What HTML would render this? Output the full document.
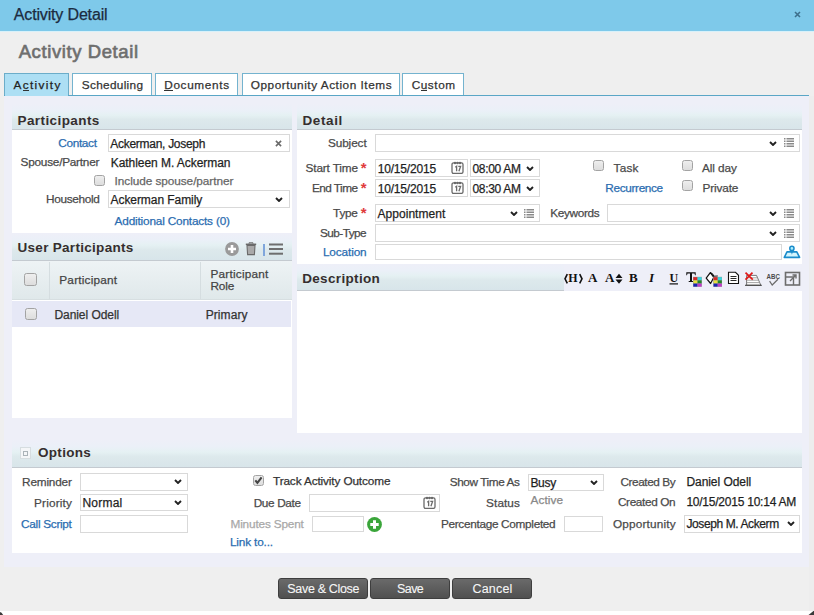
<!DOCTYPE html><html><head><meta charset="utf-8"><style>
html,body{margin:0;padding:0;}
body{width:814px;height:615px;position:relative;overflow:hidden;background:#efefef;font-family:"Liberation Sans",sans-serif;}
div{position:absolute;}
.t{position:absolute;white-space:nowrap;line-height:1;-webkit-text-stroke:0.25px currentColor;}
</style></head><body>
<div style="left:0px;top:0px;width:814px;height:31px;background:#7ec9ea;"></div>
<div style="left:0px;top:31px;width:814px;height:1px;background:#d8f1fa;"></div>
<span class="t" style="left:13.80px;top:7px;font-size:16px;color:#1b2b40;letter-spacing:-0.159px;">Activity Detail</span>
<svg style="position:absolute;left:794px;top:11px" width="7" height="7" viewBox="0 0 7 7"><path d="M1 1L6 6M6 1L1 6" stroke="#3d6f8c" stroke-width="1.6"/></svg>
<span class="t" style="left:18.70px;top:43px;font-size:18.5px;color:#6e6e6e;letter-spacing:0.591px;-webkit-text-stroke:0.65px #6e6e6e;">Activity Detail</span>
<div style="left:4px;top:96px;width:805px;height:471px;background:#eeeff8;"></div>
<div style="left:4px;top:73px;width:63px;height:22px;background:#addff4;border:1px solid #6cadc9;border-bottom:none;"></div>
<div style="left:72px;top:73px;width:78px;height:22px;background:#fff;border:1px solid #74b3cf;border-bottom:none;"></div>
<div style="left:155px;top:73px;width:80.5px;height:22px;background:#fff;border:1px solid #74b3cf;border-bottom:none;"></div>
<div style="left:241.5px;top:73px;width:156.5px;height:22px;background:#fff;border:1px solid #74b3cf;border-bottom:none;"></div>
<div style="left:402px;top:73px;width:60px;height:22px;background:#fff;border:1px solid #74b3cf;border-bottom:none;"></div>
<div style="left:4px;top:95px;width:805px;height:1px;background:#5aa6c6;"></div>
<div style="left:5px;top:95px;width:63px;height:1px;background:#addff4;"></div>
<span class="t" style="left:13.50px;top:80px;font-size:11.8px;color:#222;letter-spacing:1.347px;">Activity</span>
<span class="t" style="left:81.80px;top:80px;font-size:11.8px;color:#333;letter-spacing:0.312px;">Scheduling</span>
<span class="t" style="left:164.25px;top:80px;font-size:11.8px;color:#333;letter-spacing:0.640px;">Documents</span>
<span class="t" style="left:250.75px;top:80px;font-size:11.8px;color:#333;letter-spacing:0.533px;">Opportunity Action Items</span>
<span class="t" style="left:411.70px;top:80px;font-size:11.8px;color:#333;letter-spacing:0.549px;">Custom</span>
<div style="left:22.7px;top:90px;width:5.900000000000002px;height:1px;background:#333;"></div>
<div style="left:164.3px;top:90px;width:8.5px;height:1px;background:#333;"></div>
<div style="left:420.8px;top:90px;width:6.5px;height:1px;background:#333;"></div>
<div style="left:12px;top:104px;width:280px;height:25px;background:linear-gradient(#eeeff8 0%,#ebf0f8 25%,#e5f1f3 45%,#dde9ec 62%,#d8e5ea 100%);"></div>
<div style="left:12px;top:129px;width:280px;height:1px;background:#c4cad0;"></div>
<span class="t" style="left:17.50px;top:114px;font-size:13.5px;color:#352e2e;font-weight:bold;-webkit-text-stroke:0;letter-spacing:0.412px;">Participants</span>
<div style="left:12px;top:130px;width:280px;height:103px;background:#fff;"></div>
<div style="left:297px;top:104px;width:505px;height:25px;background:linear-gradient(#eeeff8 0%,#ebf0f8 25%,#e5f1f3 45%,#dde9ec 62%,#d8e5ea 100%);"></div>
<div style="left:297px;top:129px;width:505px;height:1px;background:#c4cad0;"></div>
<span class="t" style="left:302.50px;top:114px;font-size:13.5px;color:#352e2e;font-weight:bold;-webkit-text-stroke:0;letter-spacing:0.608px;">Detail</span>
<div style="left:297px;top:130px;width:505px;height:134px;background:#fff;"></div>
<div style="left:12px;top:233px;width:280px;height:27px;background:linear-gradient(#eeeff8 0%,#ebf0f8 25%,#e5f1f3 45%,#dde9ec 62%,#d8e5ea 100%);"></div>
<div style="left:12px;top:260px;width:280px;height:1px;background:#c4cad0;"></div>
<span class="t" style="left:17.50px;top:241px;font-size:13.5px;color:#352e2e;font-weight:bold;-webkit-text-stroke:0;letter-spacing:0.297px;">User Participants</span>
<div style="left:12px;top:261px;width:280px;height:157px;background:#fff;"></div>
<div style="left:297px;top:264px;width:505px;height:26px;background:linear-gradient(#eeeff8 0%,#ebf0f8 25%,#e5f1f3 45%,#dde9ec 62%,#d8e5ea 100%);"></div>
<div style="left:297px;top:290px;width:505px;height:1px;background:#c4cad0;"></div>
<span class="t" style="left:302.20px;top:272px;font-size:13.5px;color:#352e2e;font-weight:bold;-webkit-text-stroke:0;letter-spacing:0.334px;">Description</span>
<div style="left:297px;top:291px;width:505px;height:142px;background:#fff;"></div>
<div style="left:12px;top:440px;width:790px;height:27px;background:linear-gradient(#eeeff8 0%,#ebf0f8 25%,#e5f1f3 45%,#dde9ec 62%,#d8e5ea 100%);"></div>
<div style="left:12px;top:467px;width:790px;height:1px;background:#c4cad0;"></div>
<span class="t" style="left:38.00px;top:446px;font-size:13.5px;color:#352e2e;font-weight:bold;-webkit-text-stroke:0;letter-spacing:0.301px;">Options</span>
<div style="left:12px;top:468px;width:790px;height:85px;background:#fff;"></div>
<span class="t" style="left:58.20px;top:138px;font-size:11.8px;color:#2a6cb0;letter-spacing:-0.311px;">Contact</span>
<div style="left:108px;top:134px;width:182px;height:18px;border:1px solid #d9d9d9;background:#fff;box-sizing:border-box;"></div>
<svg style="position:absolute;left:275.3px;top:139.5px" width="7" height="7" viewBox="0 0 7 7"><path d="M0.9 0.9L6.1 6.1M6.1 0.9L0.9 6.1" stroke="#6a6a6a" stroke-width="1.6"/></svg>
<span class="t" style="left:110.30px;top:138px;font-size:12px;color:#1f1f1f;letter-spacing:-0.285px;">Ackerman, Joseph</span>
<span class="t" style="left:20.60px;top:157px;font-size:11.8px;color:#4a4a4a;letter-spacing:-0.246px;">Spouse/Partner</span>
<span class="t" style="left:110.70px;top:157px;font-size:12px;color:#1f1f1f;letter-spacing:-0.049px;">Kathleen M. Ackerman</span>
<div style="left:94px;top:175px;width:11px;height:11px;border:1px solid #a3a3a3;border-radius:2.5px;background:linear-gradient(#eeeeee,#dddddd);box-sizing:border-box;"></div>
<span class="t" style="left:114.60px;top:176px;font-size:11.8px;color:#666;letter-spacing:-0.059px;">Include spouse/partner</span>
<span class="t" style="left:46.00px;top:194px;font-size:11.8px;color:#4a4a4a;letter-spacing:-0.327px;">Household</span>
<div style="left:108px;top:190px;width:182px;height:18px;border:1px solid #d9d9d9;background:#fff;box-sizing:border-box;"></div>
<span class="t" style="left:110.50px;top:194px;font-size:12px;color:#1f1f1f;letter-spacing:-0.063px;">Ackerman Family</span>
<svg style="position:absolute;left:275px;top:197px" width="8" height="5" viewBox="0 0 8 5"><path d="M1 1L4 4L7 1" fill="none" stroke="#222" stroke-width="1.9"/></svg>
<span class="t" style="left:114.60px;top:216px;font-size:11.8px;color:#2a6cb0;letter-spacing:-0.180px;">Additional Contacts (0)</span>
<span class="t" style="left:327.90px;top:138px;font-size:11.8px;color:#4a4a4a;letter-spacing:-0.093px;">Subject</span>
<div style="left:375px;top:134px;width:425px;height:18px;border:1px solid #d9d9d9;background:#fff;box-sizing:border-box;"></div>
<svg style="position:absolute;left:769px;top:141px" width="8" height="5" viewBox="0 0 8 5"><path d="M1 1L4 4L7 1" fill="none" stroke="#222" stroke-width="1.9"/></svg>
<svg style="position:absolute;left:784px;top:138px" width="10" height="9" viewBox="0 0 10 9"><g fill="#8a8a8a"><rect x="0" y="0" width="1.5" height="1.5"/><rect x="2.5" y="0" width="7.5" height="1.5"/><rect x="0" y="2.5" width="1.5" height="1.5"/><rect x="2.5" y="2.5" width="7.5" height="1.5"/><rect x="0" y="5" width="1.5" height="1.5"/><rect x="2.5" y="5" width="7.5" height="1.5"/><rect x="0" y="7.5" width="1.5" height="1.5"/><rect x="2.5" y="7.5" width="7.5" height="1.5"/></g></svg>
<span class="t" style="left:305.60px;top:163px;font-size:11.8px;color:#4a4a4a;letter-spacing:-0.152px;">Start Time</span>
<span class="t" style="left:360.80px;top:160px;font-size:15px;color:#e03c3c;font-weight:bold;-webkit-text-stroke:0;">*</span>
<div style="left:375px;top:159px;width:93px;height:18px;border:1px solid #d9d9d9;background:#fff;box-sizing:border-box;"></div>
<span class="t" style="left:377.70px;top:163px;font-size:12px;color:#1f1f1f;letter-spacing:-0.173px;">10/15/2015</span>
<svg style="position:absolute;left:451.2px;top:160.8px" width="13" height="13" viewBox="0 0 13 13"><rect x="1" y="1.8" width="11" height="10.6" rx="1.6" fill="#fff" stroke="#6a6a6a" stroke-width="1.3"/><circle cx="4" cy="2" r="1.2" fill="#6a6a6a"/><circle cx="6.5" cy="2" r="1.2" fill="#6a6a6a"/><circle cx="9" cy="2" r="1.2" fill="#6a6a6a"/><path d="M4.3 6.2L5.6 5.2V10.3M7.3 5.4H9.6L7.9 10.3" fill="none" stroke="#6a6a6a" stroke-width="1.3"/></svg>
<div style="left:470px;top:159px;width:70px;height:18px;border:1px solid #d9d9d9;background:#fff;box-sizing:border-box;"></div>
<span class="t" style="left:472.40px;top:163px;font-size:12px;color:#1f1f1f;letter-spacing:-0.300px;">08:00 AM</span>
<svg style="position:absolute;left:526px;top:166px" width="8" height="5" viewBox="0 0 8 5"><path d="M1 1L4 4L7 1" fill="none" stroke="#222" stroke-width="1.9"/></svg>
<span class="t" style="left:312.00px;top:183px;font-size:11.8px;color:#4a4a4a;letter-spacing:-0.549px;">End Time</span>
<span class="t" style="left:360.80px;top:180px;font-size:15px;color:#e03c3c;font-weight:bold;-webkit-text-stroke:0;">*</span>
<div style="left:375px;top:179px;width:93px;height:18px;border:1px solid #d9d9d9;background:#fff;box-sizing:border-box;"></div>
<span class="t" style="left:377.70px;top:183px;font-size:12px;color:#1f1f1f;letter-spacing:-0.173px;">10/15/2015</span>
<svg style="position:absolute;left:451.2px;top:180.8px" width="13" height="13" viewBox="0 0 13 13"><rect x="1" y="1.8" width="11" height="10.6" rx="1.6" fill="#fff" stroke="#6a6a6a" stroke-width="1.3"/><circle cx="4" cy="2" r="1.2" fill="#6a6a6a"/><circle cx="6.5" cy="2" r="1.2" fill="#6a6a6a"/><circle cx="9" cy="2" r="1.2" fill="#6a6a6a"/><path d="M4.3 6.2L5.6 5.2V10.3M7.3 5.4H9.6L7.9 10.3" fill="none" stroke="#6a6a6a" stroke-width="1.3"/></svg>
<div style="left:470px;top:179px;width:70px;height:18px;border:1px solid #d9d9d9;background:#fff;box-sizing:border-box;"></div>
<span class="t" style="left:472.40px;top:183px;font-size:12px;color:#1f1f1f;letter-spacing:-0.300px;">08:30 AM</span>
<svg style="position:absolute;left:526px;top:186px" width="8" height="5" viewBox="0 0 8 5"><path d="M1 1L4 4L7 1" fill="none" stroke="#222" stroke-width="1.9"/></svg>
<div style="left:593px;top:160px;width:11px;height:11px;border:1px solid #a3a3a3;border-radius:2.5px;background:linear-gradient(#eeeeee,#dddddd);box-sizing:border-box;"></div>
<span class="t" style="left:613.60px;top:163px;font-size:11.8px;color:#4a4a4a;letter-spacing:0.179px;">Task</span>
<div style="left:682px;top:160px;width:11px;height:11px;border:1px solid #a3a3a3;border-radius:2.5px;background:linear-gradient(#eeeeee,#dddddd);box-sizing:border-box;"></div>
<span class="t" style="left:702.00px;top:163px;font-size:11.8px;color:#4a4a4a;letter-spacing:-0.103px;">All day</span>
<span class="t" style="left:605.30px;top:183px;font-size:11.8px;color:#2a6cb0;letter-spacing:-0.344px;">Recurrence</span>
<div style="left:682px;top:180px;width:11px;height:11px;border:1px solid #a3a3a3;border-radius:2.5px;background:linear-gradient(#eeeeee,#dddddd);box-sizing:border-box;"></div>
<span class="t" style="left:702.60px;top:183px;font-size:11.8px;color:#4a4a4a;letter-spacing:-0.154px;">Private</span>
<span class="t" style="left:333.10px;top:208px;font-size:11.8px;color:#4a4a4a;letter-spacing:-0.260px;">Type</span>
<span class="t" style="left:360.80px;top:205px;font-size:15px;color:#e03c3c;font-weight:bold;-webkit-text-stroke:0;">*</span>
<div style="left:375px;top:204px;width:165px;height:18px;border:1px solid #d9d9d9;background:#fff;box-sizing:border-box;"></div>
<span class="t" style="left:377.50px;top:208px;font-size:12px;color:#1f1f1f;letter-spacing:0.042px;">Appointment</span>
<svg style="position:absolute;left:509.5px;top:211px" width="8" height="5" viewBox="0 0 8 5"><path d="M1 1L4 4L7 1" fill="none" stroke="#222" stroke-width="1.9"/></svg>
<svg style="position:absolute;left:524px;top:209px" width="10" height="9" viewBox="0 0 10 9"><g fill="#8a8a8a"><rect x="0" y="0" width="1.5" height="1.5"/><rect x="2.5" y="0" width="7.5" height="1.5"/><rect x="0" y="2.5" width="1.5" height="1.5"/><rect x="2.5" y="2.5" width="7.5" height="1.5"/><rect x="0" y="5" width="1.5" height="1.5"/><rect x="2.5" y="5" width="7.5" height="1.5"/><rect x="0" y="7.5" width="1.5" height="1.5"/><rect x="2.5" y="7.5" width="7.5" height="1.5"/></g></svg>
<span class="t" style="left:550.20px;top:208px;font-size:11.8px;color:#4a4a4a;letter-spacing:-0.330px;">Keywords</span>
<div style="left:607px;top:204px;width:193px;height:18px;border:1px solid #d9d9d9;background:#fff;box-sizing:border-box;"></div>
<svg style="position:absolute;left:769px;top:211px" width="8" height="5" viewBox="0 0 8 5"><path d="M1 1L4 4L7 1" fill="none" stroke="#222" stroke-width="1.9"/></svg>
<svg style="position:absolute;left:784px;top:209px" width="10" height="9" viewBox="0 0 10 9"><g fill="#8a8a8a"><rect x="0" y="0" width="1.5" height="1.5"/><rect x="2.5" y="0" width="7.5" height="1.5"/><rect x="0" y="2.5" width="1.5" height="1.5"/><rect x="2.5" y="2.5" width="7.5" height="1.5"/><rect x="0" y="5" width="1.5" height="1.5"/><rect x="2.5" y="5" width="7.5" height="1.5"/><rect x="0" y="7.5" width="1.5" height="1.5"/><rect x="2.5" y="7.5" width="7.5" height="1.5"/></g></svg>
<span class="t" style="left:319.90px;top:228px;font-size:11.8px;color:#4a4a4a;letter-spacing:-0.529px;">Sub-Type</span>
<div style="left:375px;top:224px;width:425px;height:18px;border:1px solid #d9d9d9;background:#fff;box-sizing:border-box;"></div>
<svg style="position:absolute;left:769px;top:231px" width="8" height="5" viewBox="0 0 8 5"><path d="M1 1L4 4L7 1" fill="none" stroke="#222" stroke-width="1.9"/></svg>
<svg style="position:absolute;left:784px;top:229px" width="10" height="9" viewBox="0 0 10 9"><g fill="#8a8a8a"><rect x="0" y="0" width="1.5" height="1.5"/><rect x="2.5" y="0" width="7.5" height="1.5"/><rect x="0" y="2.5" width="1.5" height="1.5"/><rect x="2.5" y="2.5" width="7.5" height="1.5"/><rect x="0" y="5" width="1.5" height="1.5"/><rect x="2.5" y="5" width="7.5" height="1.5"/><rect x="0" y="7.5" width="1.5" height="1.5"/><rect x="2.5" y="7.5" width="7.5" height="1.5"/></g></svg>
<span class="t" style="left:322.90px;top:247px;font-size:11.8px;color:#2a6cb0;letter-spacing:-0.116px;">Location</span>
<div style="left:375px;top:244px;width:407px;height:16px;border:1px solid #d9d9d9;background:#fff;box-sizing:border-box;"></div>
<svg style="position:absolute;left:780px;top:242px" width="24" height="20" viewBox="0 0 24 20"><path d="M7 9.9H16.8L19.6 15.4H4.3Z" fill="#d4f5fd" stroke="#1b8ccb" stroke-width="1.6" stroke-linejoin="round"/><path d="M10.2 7.3L11.9 12.8L13.6 7.3Z" fill="#1b8ccb"/><circle cx="11.9" cy="6.4" r="2.1" fill="#aef0ff" stroke="#1b8ccb" stroke-width="1.5"/></svg>
<svg style="position:absolute;left:225px;top:242px" width="14" height="14" viewBox="0 0 14 14"><circle cx="7" cy="7" r="6.9" fill="#9a9a9a"/><path d="M7 3V11M3 7H11" stroke="#fff" stroke-width="2.6"/></svg>
<svg style="position:absolute;left:245px;top:242px" width="12" height="14" viewBox="0 0 12 14"><path d="M0.8 2.3H11.2" stroke="#6a6a6a" stroke-width="1.5"/><path d="M4 1.6V0.8H8V1.6" fill="none" stroke="#6a6a6a" stroke-width="1"/><path d="M2 3.5H10L9.4 12.6H2.6Z" fill="#a9a9a9" stroke="#6a6a6a" stroke-width="1.1"/></svg>
<div style="left:263px;top:244px;width:2px;height:12px;background:#7fa6dc;"></div>
<svg style="position:absolute;left:269px;top:243px" width="14" height="12" viewBox="0 0 14 12"><rect x="0" y="0.5" width="14" height="2" fill="#6e6e6e"/><rect x="0" y="5" width="14" height="2" fill="#6e6e6e"/><rect x="0" y="9.7" width="14" height="2" fill="#6e6e6e"/></svg>
<div style="left:12px;top:261px;width:280px;height:39px;background:linear-gradient(#eef3f5,#dfe8ea);"></div>
<div style="left:12px;top:299px;width:280px;height:1px;background:#d7dfe1;"></div>
<div style="left:49px;top:262px;width:1px;height:37px;background:#d5dde0;"></div>
<div style="left:200px;top:262px;width:1px;height:37px;background:#d5dde0;"></div>
<div style="left:24px;top:273px;width:12.5px;height:12.5px;border:1px solid #a3a3a3;border-radius:2.5px;background:linear-gradient(#eeeeee,#dddddd);box-sizing:border-box;"></div>
<span class="t" style="left:59.30px;top:275px;font-size:11.8px;color:#444;letter-spacing:0.205px;">Participant</span>
<span class="t" style="left:210.50px;top:269px;font-size:11.8px;color:#444;letter-spacing:0.205px;">Participant</span>
<span class="t" style="left:210.50px;top:281px;font-size:11.8px;color:#444;letter-spacing:-0.156px;">Role</span>
<div style="left:12px;top:301px;width:279px;height:26px;background:#e6e8f6;"></div>
<div style="left:25px;top:308px;width:12px;height:12px;border:1px solid #a3a3a3;border-radius:2.5px;background:linear-gradient(#eeeeee,#dddddd);box-sizing:border-box;"></div>
<span class="t" style="left:54.40px;top:309px;font-size:12px;color:#333;letter-spacing:-0.051px;">Daniel Odell</span>
<span class="t" style="left:205.70px;top:309px;font-size:12px;color:#333;letter-spacing:0.078px;">Primary</span>
<div style="left:20px;top:447px;width:11px;height:12px;border:1px solid #d6dde0;background:#f4f6f8;box-sizing:border-box;"></div>
<div style="left:23px;top:451px;width:5px;height:5px;border:1px solid #aab3b8;box-sizing:border-box;"></div>
<span class="t" style="left:22.10px;top:477px;font-size:11.8px;color:#4a4a4a;letter-spacing:-0.193px;">Reminder</span>
<div style="left:80px;top:473px;width:108px;height:18px;border:1px solid #d9d9d9;background:#fff;box-sizing:border-box;"></div>
<svg style="position:absolute;left:174px;top:479px" width="8" height="5" viewBox="0 0 8 5"><path d="M1 1L4 4L7 1" fill="none" stroke="#222" stroke-width="1.9"/></svg>
<span class="t" style="left:34.10px;top:498px;font-size:11.8px;color:#4a4a4a;letter-spacing:0.155px;">Priority</span>
<div style="left:80px;top:494px;width:108px;height:17px;border:1px solid #d9d9d9;background:#fff;box-sizing:border-box;"></div>
<svg style="position:absolute;left:174px;top:500px" width="8" height="5" viewBox="0 0 8 5"><path d="M1 1L4 4L7 1" fill="none" stroke="#222" stroke-width="1.9"/></svg>
<span class="t" style="left:82.40px;top:497px;font-size:12px;color:#1f1f1f;letter-spacing:0.226px;">Normal</span>
<span class="t" style="left:21.10px;top:519px;font-size:11.8px;color:#2a6cb0;letter-spacing:-0.297px;">Call Script</span>
<div style="left:80px;top:515px;width:108px;height:18px;border:1px solid #d9d9d9;background:#fff;box-sizing:border-box;"></div>
<div style="left:253px;top:475px;width:11px;height:11px;border:1px solid #a3a3a3;border-radius:2.5px;background:linear-gradient(#eeeeee,#dddddd);box-sizing:border-box;"></div>
<svg style="position:absolute;left:253px;top:475px" width="11" height="11" viewBox="0 0 11 11"><path d="M2.3 5.4L4.4 7.8L8.6 2.4" fill="none" stroke="#444" stroke-width="2.1"/></svg>
<span class="t" style="left:273.00px;top:476px;font-size:11.8px;color:#333;letter-spacing:-0.129px;">Track Activity Outcome</span>
<span class="t" style="left:253.70px;top:498px;font-size:11.8px;color:#4a4a4a;letter-spacing:-0.364px;">Due Date</span>
<div style="left:309px;top:494px;width:131px;height:18px;border:1px solid #d9d9d9;background:#fff;box-sizing:border-box;"></div>
<svg style="position:absolute;left:423.2px;top:495.8px" width="13" height="13" viewBox="0 0 13 13"><rect x="1" y="1.8" width="11" height="10.6" rx="1.6" fill="#fff" stroke="#6a6a6a" stroke-width="1.3"/><circle cx="4" cy="2" r="1.2" fill="#6a6a6a"/><circle cx="6.5" cy="2" r="1.2" fill="#6a6a6a"/><circle cx="9" cy="2" r="1.2" fill="#6a6a6a"/><path d="M4.3 6.2L5.6 5.2V10.3M7.3 5.4H9.6L7.9 10.3" fill="none" stroke="#6a6a6a" stroke-width="1.3"/></svg>
<span class="t" style="left:230.50px;top:519px;font-size:11.8px;color:#a8a8a8;letter-spacing:-0.169px;">Minutes Spent</span>
<div style="left:312px;top:516px;width:52px;height:16px;border:1px solid #d9d9d9;background:#fff;box-sizing:border-box;"></div>
<svg style="position:absolute;left:367px;top:517px" width="15" height="15" viewBox="0 0 15 15"><circle cx="7.5" cy="7.5" r="7.4" fill="#3aa53a"/><path d="M7.5 3.3V11.7M3.3 7.5H11.7" stroke="#fff" stroke-width="3"/></svg>
<span class="t" style="left:229.90px;top:537px;font-size:11.8px;color:#2a6cb0;letter-spacing:-0.156px;">Link to...</span>
<span class="t" style="left:449.70px;top:477px;font-size:11.8px;color:#4a4a4a;letter-spacing:-0.415px;">Show Time As</span>
<div style="left:528px;top:473.5px;width:76px;height:17.5px;border:1px solid #d9d9d9;background:#fff;box-sizing:border-box;"></div>
<span class="t" style="left:530.40px;top:477px;font-size:12px;color:#1f1f1f;letter-spacing:-0.293px;">Busy</span>
<svg style="position:absolute;left:590px;top:480px" width="8" height="5" viewBox="0 0 8 5"><path d="M1 1L4 4L7 1" fill="none" stroke="#222" stroke-width="1.9"/></svg>
<span class="t" style="left:486.10px;top:498px;font-size:11.8px;color:#4a4a4a;letter-spacing:0.070px;">Status</span>
<span class="t" style="left:530.40px;top:495px;font-size:11.8px;color:#888;letter-spacing:0.133px;">Active</span>
<span class="t" style="left:440.90px;top:519px;font-size:11.8px;color:#4a4a4a;letter-spacing:-0.310px;">Percentage Completed</span>
<div style="left:564px;top:516px;width:39px;height:16px;border:1px solid #d9d9d9;background:#fff;box-sizing:border-box;"></div>
<span class="t" style="left:620.50px;top:477px;font-size:11.8px;color:#4a4a4a;letter-spacing:-0.425px;">Created By</span>
<span class="t" style="left:686.40px;top:476px;font-size:12px;color:#1f1f1f;letter-spacing:-0.051px;">Daniel Odell</span>
<span class="t" style="left:617.90px;top:497px;font-size:11.8px;color:#4a4a4a;letter-spacing:-0.355px;">Created On</span>
<span class="t" style="left:686.40px;top:496px;font-size:12px;color:#1f1f1f;letter-spacing:-0.233px;">10/15/2015 10:14 AM</span>
<span class="t" style="left:612.90px;top:519px;font-size:11.8px;color:#4a4a4a;letter-spacing:0.180px;">Opportunity</span>
<div style="left:684px;top:515px;width:116px;height:18px;border:1px solid #d9d9d9;background:#fff;box-sizing:border-box;"></div>
<span class="t" style="left:686.40px;top:518px;font-size:12px;color:#1f1f1f;letter-spacing:-0.394px;">Joseph M. Ackerm</span>
<svg style="position:absolute;left:786.5px;top:521px" width="8" height="5" viewBox="0 0 8 5"><path d="M1 1L4 4L7 1" fill="none" stroke="#222" stroke-width="1.9"/></svg>
<div style="left:564px;top:264px;width:238px;height:27px;background:#eeeff8;"></div>
<svg style="position:absolute;left:564px;top:271px" width="240" height="16" viewBox="0 0 240 16">
<g font-family="Liberation Serif" font-weight="bold" fill="#111">
<path d="M3.3 3.2L1 7.8L3.3 12.4" fill="none" stroke="#111" stroke-width="1.6"/><text x="4.2" y="11" font-size="12">H</text><path d="M15.7 3.2L18 7.8L15.7 12.4" fill="none" stroke="#111" stroke-width="1.6"/>
<text x="24" y="11.4" font-size="13">A</text>
<text x="41" y="11.4" font-size="13">A</text>
<path d="M51.5 7L55 2.8L58.5 7Z M51.5 8.5L55 12.7L58.5 8.5Z" fill="#111"/>
<text x="65" y="11.4" font-size="13">B</text>
<text x="85" y="11.4" font-size="13" font-style="italic">I</text>
<text x="105.5" y="11.2" font-size="12">U</text>
<rect x="105.5" y="12.3" width="8.5" height="1.2" fill="#111"/>
<path d="M122.3 1.3H131.7V4.2H131L130.5 2.6H128V10H129.3V10.9H124.7V10H126V2.6H123.5L123 4.2H122.3Z" fill="#111"/>
</g>
<g>
<rect x="129.0" y="5.8" width="8.8" height="10" fill="#9a9a9a"/><rect x="129.4" y="6.2" width="4" height="3" fill="#d82a2a"/><rect x="133.6" y="6.2" width="4" height="3" fill="#35d5dd"/><rect x="129.4" y="9.4" width="4" height="3" fill="#e6e23a"/><rect x="133.6" y="9.4" width="4" height="3" fill="#23862b"/><rect x="129.4" y="12.6" width="4" height="3" fill="#1b24b5"/><rect x="133.6" y="12.6" width="4" height="3" fill="#c239c9"/><path d="M142.2 7.2L146.3 1.6L149.8 6.3L146.6 12.5Z" fill="#fff" stroke="#111" stroke-width="1.2" stroke-linejoin="round"/><path d="M146.3 1.6Q149 3 150 5.2L153.8 5" fill="none" stroke="#111" stroke-width="1.1"/><rect x="149.2" y="5.8" width="8.8" height="10" fill="#9a9a9a"/><rect x="149.6" y="6.2" width="4" height="3" fill="#d82a2a"/><rect x="153.8" y="6.2" width="4" height="3" fill="#35d5dd"/><rect x="149.6" y="9.4" width="4" height="3" fill="#e6e23a"/><rect x="153.8" y="9.4" width="4" height="3" fill="#23862b"/><rect x="149.6" y="12.6" width="4" height="3" fill="#1b24b5"/><rect x="153.8" y="12.6" width="4" height="3" fill="#c239c9"/><path d="M164.5 1.3H171.5L174.5 4.3V12.5H164.5Z" fill="#fff" stroke="#111" stroke-width="1.1"/>
<path d="M166.5 5.5H172.5M166.5 7.5H172.5M166.5 9.5H172.5" stroke="#111" stroke-width="0.9"/>
<path d="M182.6 4.4H192.5L196.8 14.2H182.6Z" fill="#fff" stroke="#666" stroke-width="0.9"/>
<path d="M183 6.8H193.6M183 9.2H194.8M183 11.6H195.8" stroke="#9a9a9a" stroke-width="0.9"/>
<path d="M181 14.3H197.8" stroke="#444" stroke-width="1.1"/>
<path d="M181.5 1.6L188.8 8.6M188.5 1.6L181.5 8.6" stroke="#e01818" stroke-width="1.7"/>
<text x="202.6" y="7.9" font-size="7" font-family="Liberation Sans" font-weight="bold" fill="#4a4a4a" textLength="13.3" lengthAdjust="spacingAndGlyphs">ABC</text>
<path d="M205.6 10.2L208.2 14L214 8.3" fill="none" stroke="#6a6a6a" stroke-width="1.2"/>
<rect x="221.5" y="1.5" width="14" height="12.5" fill="none" stroke="#6d6d6d" stroke-width="1.6"/>
<path d="M221.5 6H229.5V14" fill="none" stroke="#6d6d6d" stroke-width="1.4"/>
<path d="M226 10L232 4M228.5 4H232V7.5" fill="none" stroke="#6d6d6d" stroke-width="1.4"/>
</g></svg>

<div style="left:278px;top:578px;width:90px;height:21px;background:linear-gradient(#6a6a6a,#505050);border:1px solid #3e3e3e;border-radius:3px;box-sizing:border-box;"></div>
<span class="t" style="left:287.35px;top:583px;font-size:12.5px;color:#f6f6f6;letter-spacing:-0.330px;-webkit-text-stroke:0.1px #f6f6f6;">Save &amp; Close</span>
<div style="left:370px;top:578px;width:80px;height:21px;background:linear-gradient(#6a6a6a,#505050);border:1px solid #3e3e3e;border-radius:3px;box-sizing:border-box;"></div>
<span class="t" style="left:397.00px;top:583px;font-size:12.5px;color:#f6f6f6;letter-spacing:-0.564px;-webkit-text-stroke:0.1px #f6f6f6;">Save</span>
<div style="left:452px;top:578px;width:80px;height:21px;background:linear-gradient(#6a6a6a,#505050);border:1px solid #3e3e3e;border-radius:3px;box-sizing:border-box;"></div>
<span class="t" style="left:472.50px;top:583px;font-size:12.5px;color:#f6f6f6;letter-spacing:0.178px;-webkit-text-stroke:0.1px #f6f6f6;">Cancel</span>
<div style="left:0px;top:611px;width:814px;height:4px;background:#fff;"></div>
<svg style="position:absolute;left:0;top:605px" width="814" height="10" viewBox="0 0 814 10"><path d="M0 7Q1.5 7.2 3.2 10H0Z" fill="#3a3a3a"/><path d="M814 5.5L808.5 10H814Z" fill="#3a3a3a"/></svg>
<div style="left:809px;top:96px;width:5px;height:515px;background:#ededed;"></div>
</body></html>
